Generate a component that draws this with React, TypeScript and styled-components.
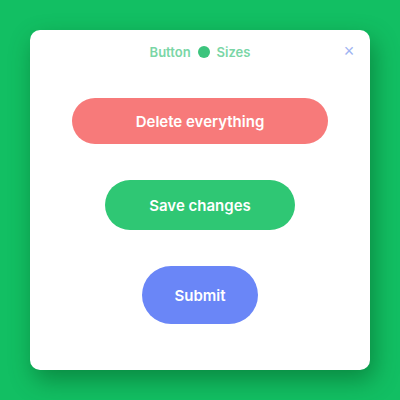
import React from "react";
import styled, { createGlobalStyle } from "styled-components";

const Global = createGlobalStyle`
  html, body { margin: 0; padding: 0; }
  body {
    width: 400px;
    height: 400px;
    background: #12bf63;
    font-family: "Inter", "Liberation Sans", sans-serif;
  }
  #root { width: 400px; height: 400px; }
`;

const Page = styled.div`
  box-sizing: border-box;
  width: 400px;
  height: 400px;
  padding: 30px;
  display: flex;
`;

const Card = styled.div`
  position: relative;
  flex: 1;
  background: #ffffff;
  border-radius: 10px;
  box-shadow: 4px 10px 24px rgba(0, 70, 25, 0.45);
  display: flex;
  flex-direction: column;
  align-items: center;
  padding-top: 14px;
  box-sizing: border-box;
`;

const Title = styled.div`
  display: flex;
  align-items: center;
  gap: 6px;
  color: #7ad6a6;
  font-size: 13px;
  font-weight: 600;
  height: 16px;
`;

const Close = styled.button`
  position: absolute;
  top: 12px;
  right: 12px;
  width: 18px;
  height: 18px;
  border: none;
  padding: 0;
  background: transparent;
  color: #9fb4f2;
  font-size: 18px;
  line-height: 18px;
  cursor: pointer;
`;

const Stack = styled.div`
  display: flex;
  flex-direction: column;
  align-items: center;
  margin-top: 38px;
  gap: 36px;
`;

const Pill = styled.button<{ $bg: string; $w: number; $h: number }>`
  width: ${(p) => p.$w}px;
  height: ${(p) => p.$h}px;
  border: none;
  border-radius: 999px;
  background: ${(p) => p.$bg};
  color: #ffffff;
  font-family: "Inter", "Liberation Sans", sans-serif;
  font-size: 15px;
  font-weight: 600;
  cursor: pointer;
`;

export default function App() {
  return (
    <>
      <Global />
      <Page>
        <Card>
          <Title>
            <span>Button</span>
            <svg width="14" height="14" viewBox="0 0 14 14">
              <circle cx="7" cy="7" r="6" fill="#3cc47d" />
            </svg>
            <span>Sizes</span>
          </Title>
          <Close aria-label="close">×</Close>
          <Stack>
            <Pill $bg="#f77a7a" $w={256} $h={46}>Delete everything</Pill>
            <Pill $bg="#2fc774" $w={190} $h={50}>Save changes</Pill>
            <Pill $bg="#6a86f7" $w={116} $h={58}>Submit</Pill>
          </Stack>
        </Card>
      </Page>
    </>
  );
}
